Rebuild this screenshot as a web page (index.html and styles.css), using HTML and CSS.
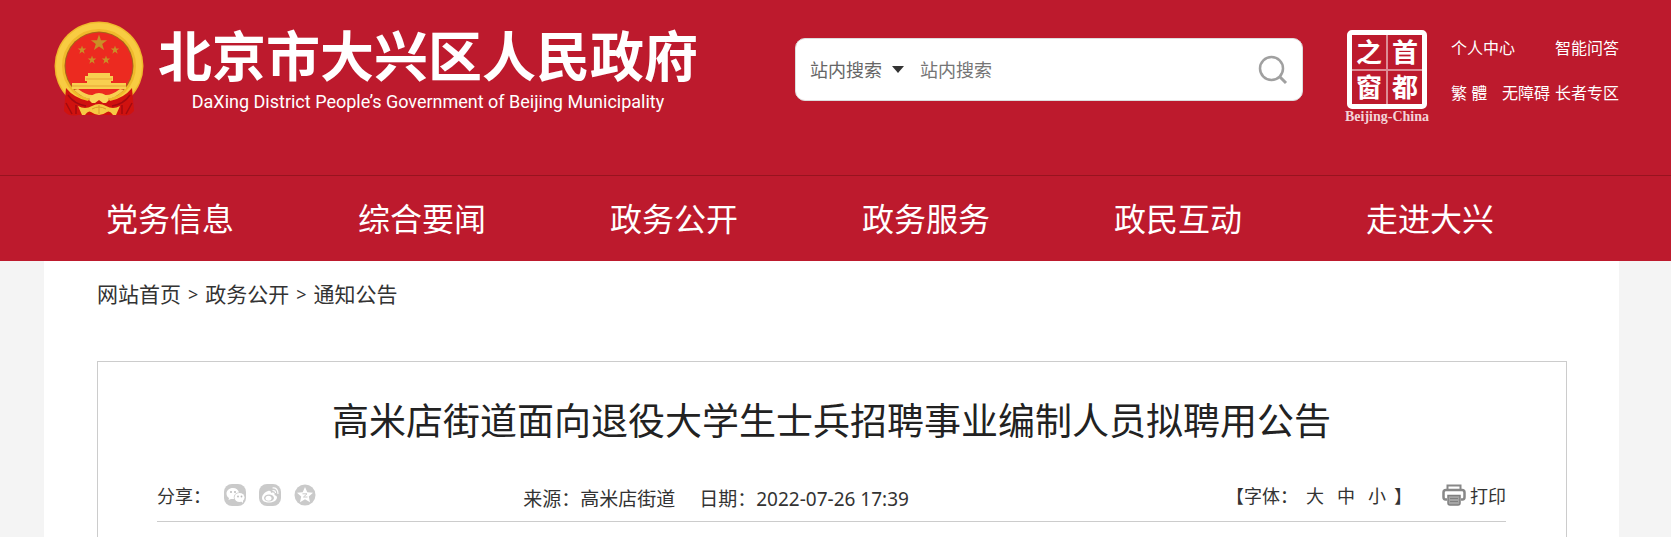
FILE: index.html
```html
<!DOCTYPE html>
<html lang="zh-CN">
<head>
    <meta charset="UTF-8">
    <meta name="viewport" content="width=device-width, initial-scale=1.0">
    <title>高米店街道面向退役大学生士兵招聘事业编制人员拟聘用公告</title>
    <link rel="stylesheet" href="styles.css">
</head>
<body>
    <header class="header">
        <div class="wrap header-top">
            <a class="logo" href="#">
                <svg class="emblem" viewBox="0 0 90 98" aria-hidden="true">
                    <defs>
                        <path id="star" d="M0 -10 L2.300 -3.200 L9.500 -3.100 L3.800 1.200 L5.900 8.100 L0 4 L-5.900 8.100 L-3.800 1.200 L-9.500 -3.100 L-2.300 -3.200 Z"/>
                    </defs>
                    <circle cx="45" cy="45" r="44.500" fill="#f0b92c"/>
                    <circle cx="45" cy="45" r="40" fill="none" stroke="#f8cc42" stroke-width="6"/>
                    <circle cx="45" cy="45" r="34.500" fill="#a8641a"/>
                    <circle cx="45" cy="45" r="33.500" fill="#ec2a20"/>
                    <g fill="#c98f27">
                        <use href="#star" transform="translate(45 22) scale(.85)"/>
                        <use href="#star" transform="translate(28 29) scale(.45)"/>
                        <use href="#star" transform="translate(61 29) scale(.45)"/>
                        <use href="#star" transform="translate(38 39) scale(.45)"/>
                        <use href="#star" transform="translate(52 39) scale(.45)"/>
                    </g>
                    <path d="M34 52 H56 V55 H59 V60 H57 V62 H72 V68 H18 V62 H33 V60 H31 V55 H34 Z" fill="#f8cf50"/>
                    <path d="M32 58 H58 M18 65 H72" stroke="#e7a534" fill="none"/>
                    <path d="M12 67 Q20 77 34 80 L37 76 H53 L56 80 Q70 77 78 67 L80 90 Q75 96 66 94 H24 Q15 96 10 90 Z" fill="#d0120f"/>
                    <path d="M14 74 Q20 83 32 85 M12 82 L18 93 M22 84 L22 93 M76 74 Q70 83 58 85 M78 82 L72 93 M68 84 L68 93" stroke="#a30a10" stroke-width="1.500" fill="none"/>
                    <path d="M20 69 Q31 79 39 78 H51 Q59 79 70 69 L66 68 Q58 74 52 74 H38 Q32 74 24 68 Z" fill="#f8cf50"/>
                    <path d="M35 79 Q38 72 45 72 Q52 72 55 79 L52 82 H49 L45 79 L41 82 H38 Z" fill="#fad65a"/>
                    <path d="M24 85 Q31 89 38 85 Q45 81 52 85 Q59 89 66 85 L62 94 H59 Q56 89 53 91 Q45 97 37 91 Q34 89 31 94 H28 Z" fill="#f6c944"/>
                    <path d="M38 88 Q45 84 52 88 M45 84 V93" stroke="#dc9a2a" fill="none"/>
                </svg>
                <span class="logo-text">
                    <span class="logo-cn">北京市大兴区人民政府</span>
                    <span class="logo-en">DaXing District People’s Government of Beijing Municipality</span>
                </span>
            </a>
            <form class="search" role="search">
                <select class="search-type" aria-label="搜索范围">
                    <option>站内搜索</option>
                </select>
                <svg class="caret" viewBox="0 0 12 7" aria-hidden="true"><path d="M0 0 H12 L6 7 Z" fill="#333"/></svg>
                <input class="search-input" type="text" placeholder="站内搜索" aria-label="站内搜索">
                <button class="search-btn" type="submit" aria-label="搜索">
                    <svg viewBox="0 0 30 30" aria-hidden="true">
                        <circle cx="13.500" cy="13.500" r="11.500" fill="none" stroke="#a0a0a0" stroke-width="2.500"/>
                        <path d="M21.500 21.500 L28 28" stroke="#a0a0a0" stroke-width="3"/>
                    </svg>
                </button>
            </form>
            <a class="capital" href="#">
                <span class="seal">
                    <span>之</span><span>首</span><span>窗</span><span>都</span>
                </span>
                <span class="capital-en">Beijing-China</span>
            </a>
            <div class="top-links">
                <div class="link-row">
                    <a href="#">个人中心</a>
                    <a href="#">智能问答</a>
                </div>
                <div class="link-row">
                    <a href="#">繁 體</a>
                    <span class="link-pair"><a href="#">无障碍</a><a href="#">长者专区</a></span>
                </div>
            </div>
        </div>
        <nav class="nav">
            <ul class="wrap nav-list">
                <li><a href="#">党务信息</a></li>
                <li><a href="#">综合要闻</a></li>
                <li><a href="#">政务公开</a></li>
                <li><a href="#">政务服务</a></li>
                <li><a href="#">政民互动</a></li>
                <li><a href="#">走进大兴</a></li>
            </ul>
        </nav>
    </header>

    <main class="wrap content">
        <div class="crumbs">
            <a href="#">网站首页</a><span>&gt;</span><a href="#">政务公开</a><span>&gt;</span><a href="#">通知公告</a>
        </div>
        <article class="article">
            <h1>高米店街道面向退役大学生士兵招聘事业编制人员拟聘用公告</h1>
            <div class="meta">
                <div class="share">
                    <span>分享：</span>
                    <a href="#" aria-label="微信">
                        <svg viewBox="0 0 22 22" aria-hidden="true">
                            <rect width="22" height="22" rx="8" fill="#cacaca"/>
                            <path d="M9 4 C5 4 2.500 6.500 2.500 9.500 C2.500 11.500 3.500 13 5 14 L4.500 16 L7 15 H10 C9 11 12 8.500 15 8.500 C14.500 6 12 4 9 4 Z" fill="#fff"/>
                            <ellipse cx="15.500" cy="13.500" rx="5" ry="4.500" fill="#fff"/>
                            <path d="M17 17 L19 19 L19 15 Z" fill="#fff"/>
                            <g fill="#bbb"><circle cx="7" cy="8" r="1"/><circle cx="11" cy="8" r="1"/><circle cx="14" cy="12.500" r=".9"/><circle cx="17.500" cy="12.500" r=".9"/></g>
                        </svg>
                    </a>
                    <a href="#" aria-label="微博">
                        <svg viewBox="0 0 22 22" aria-hidden="true">
                            <rect width="22" height="22" rx="8" fill="#cacaca"/>
                            <path d="M9 7 C6 8 3 11 3 14 C3 17 6 18.500 10 18.500 C14 18.500 18 16.500 18 13.500 C18 12 17 11.500 15.500 11 C16 9 15 8 12 9 C12 7 11 6.500 9 7 Z" fill="#fff"/>
                            <ellipse cx="10" cy="14" rx="5" ry="3.500" fill="#cacaca"/>
                            <ellipse cx="9.500" cy="14.300" rx="3" ry="2.500" fill="#fff"/>
                            <path d="M13.500 4 Q19 3.500 19 10 M13.500 6.500 Q16.500 6.300 16.500 9" fill="none" stroke="#fff" stroke-width="1.200"/>
                        </svg>
                    </a>
                    <a href="#" aria-label="QQ空间">
                        <svg viewBox="0 0 22 22" aria-hidden="true">
                            <circle cx="11" cy="11" r="10.500" fill="#cacaca"/>
                            <path d="M11 3 L13.300 8.200 L19 8.800 L14.800 12.600 L16 18.200 L11 15.300 L6 18.200 L7.200 12.600 L3 8.800 L8.700 8.200 Z" fill="#fff"/>
                            <path d="M8.500 9.800 H13 L9.500 13 H13.500" fill="none" stroke="#cacaca"/>
                        </svg>
                    </a>
                </div>
                <div class="source">
                    <span>来源：高米店街道</span>
                    <span>日期：2022-07-26 17:39</span>
                </div>
                <div class="tools">
                    <div class="font-size">
                        <span>【字体：</span>
                        <span class="sizes">
                            <button type="button">大</button>
                            <button type="button">中</button>
                            <button type="button">小</button>
                        </span>
                        <span>】</span>
                    </div>
                    <button class="print" type="button">
                        <svg viewBox="0 0 24 22" aria-hidden="true">
                            <path d="M5.500 6 V1.500 H18.500 V6" fill="none" stroke="#888" stroke-width="2"/>
                            <path d="M5 15.500 H3.500 Q1.500 15.500 1.500 13 V8.500 Q1.500 6 4 6 H20 Q22.500 6 22.500 8.500 V13 Q22.500 15.500 20.500 15.500 H19" fill="none" stroke="#888" stroke-width="2.500"/>
                            <path d="M6 11.500 H18 V19 Q18 21 16 21 H8 Q6 21 6 19 Z" fill="#a5a5a5" stroke="#808080" stroke-width="1.500"/>
                            <path d="M8 14.500 H16 M8 17.500 H16" stroke="#808080"/>
                        </svg>
                        <span>打印</span>
                    </button>
                </div>
            </div>
        </article>
    </main>
</body>
</html>
```

FILE: styles.css
```css
* {
    box-sizing: border-box;
}
body {
    margin: 0;
    font-family: "Noto Sans", "Noto Sans CJK SC", sans-serif;
    font-size: 18px;
    color: #333;
    background-color: #f4f4f4;
}
a {
    color: inherit;
    text-decoration: none;
}
button, input, select {
    font: inherit;
    color: inherit;
    border: none;
    background: none;
    padding: 0;
    margin: 0;
}
button {
    cursor: pointer;
}
.wrap {
    margin: 0 52px 0 44px;
}

/* header */
.header {
    background-color: #bd1a2d;
    color: #fff;
}
.header-top {
    display: flex;
    align-items: flex-start;
    height: 175px;
    padding-top: 20px;
}
.logo {
    display: flex;
    margin-left: 10px;
}
.emblem {
    width: 90px;
    height: 98px;
    margin-top: 1px;
}
.logo-text {
    display: flex;
    flex-direction: column;
    align-items: center;
    gap: 4px;
    margin-left: 14px;
}
.logo-cn {
    font-family: "Noto Sans CJK SC", sans-serif;
    font-size: 54px;
    font-weight: 700;
    line-height: 68px;
}
.logo-en {
    font-family: Roboto, sans-serif;
    font-size: 18px;
    line-height: 20px;
}
.search {
    display: flex;
    align-items: center;
    width: 508px;
    height: 63px;
    margin: 18px 0 0 auto;
    padding: 0 14px;
    border: 1px solid #ddd;
    border-radius: 10px;
    background-color: #fff;
    color: #666;
}
.search-type {
    appearance: none;
    width: 82px;
}
.caret {
    width: 12px;
    height: 7px;
}
.search-input {
    flex: 1;
    min-width: 0;
    margin-left: 16px;
    outline: none;
}
.search-input::placeholder {
    color: #757575;
}
.search-btn svg {
    display: block;
    width: 30px;
    height: 30px;
}
.capital {
    display: flex;
    flex-direction: column;
    align-items: center;
    width: 88px;
    margin: 10px 0 0 40px;
}
.seal {
    display: grid;
    grid-template-columns: 1fr 1fr;
    gap: 2px;
    width: 80px;
    height: 79px;
    border: 5px solid #fff;
    border-radius: 5px;
    background-color: #dd8c95;
}
.seal span {
    display: flex;
    align-items: center;
    justify-content: center;
    background-color: #bd1a2d;
    font-size: 26px;
    font-weight: 700;
    line-height: 30px;
}
.capital-en {
    font-family: "Liberation Serif", serif;
    font-size: 14px;
    font-weight: 700;
    line-height: 16px;
    white-space: nowrap;
    color: #f3d3d7;
}
.top-links {
    display: flex;
    flex-direction: column;
    gap: 21px;
    width: 168px;
    margin: 16px 0 0 20px;
    font-size: 16px;
    line-height: 24px;
}
.link-row {
    display: flex;
    justify-content: space-between;
}
.link-pair {
    display: flex;
    gap: 5px;
}

/* main menu */
.nav {
    border-top: 1px solid #98131f;
}
.nav-list {
    display: flex;
    padding: 0;
    list-style: none;
}
.nav-list li {
    width: 16%;
}
.nav-list a {
    display: block;
    font-size: 32px;
    line-height: 85px;
    text-align: center;
}

/* page body */
.content {
    min-height: 276px;
    padding: 0 52px 0 53px;
    background-color: #fff;
}
.crumbs {
    display: flex;
    gap: 7px;
    padding-top: 18px;
    font-size: 21px;
    line-height: 30px;
}
.crumbs span {
    font-size: 18px;
}
.article {
    min-height: 176px;
    margin-top: 52px;
    padding: 32px 60px 0 59px;
    border: 1px solid #ccc;
    border-bottom: none;
}
.article h1 {
    margin: 0;
    font-size: 37px;
    font-weight: 400;
    line-height: 54px;
    text-align: center;
    color: #222;
}
.meta {
    display: flex;
    align-items: center;
    height: 74px;
    padding-top: 20px;
    border-bottom: 1px solid #ccc;
}
.share {
    display: flex;
    align-items: center;
    gap: 13px;
    width: 27%;
}
.share svg {
    display: block;
    width: 22px;
    height: 22px;
}
.source {
    display: flex;
    gap: 24px;
    padding: 6px 0 0 2px;
    font-size: 19px;
}
.tools {
    display: flex;
    align-items: center;
    gap: 30px;
    margin-left: auto;
}
.font-size {
    display: flex;
    gap: 8px;
}
.sizes {
    display: flex;
    gap: 13px;
}
.print {
    display: flex;
    align-items: center;
    gap: 4px;
}
.print svg {
    width: 24px;
    height: 22px;
}
```
